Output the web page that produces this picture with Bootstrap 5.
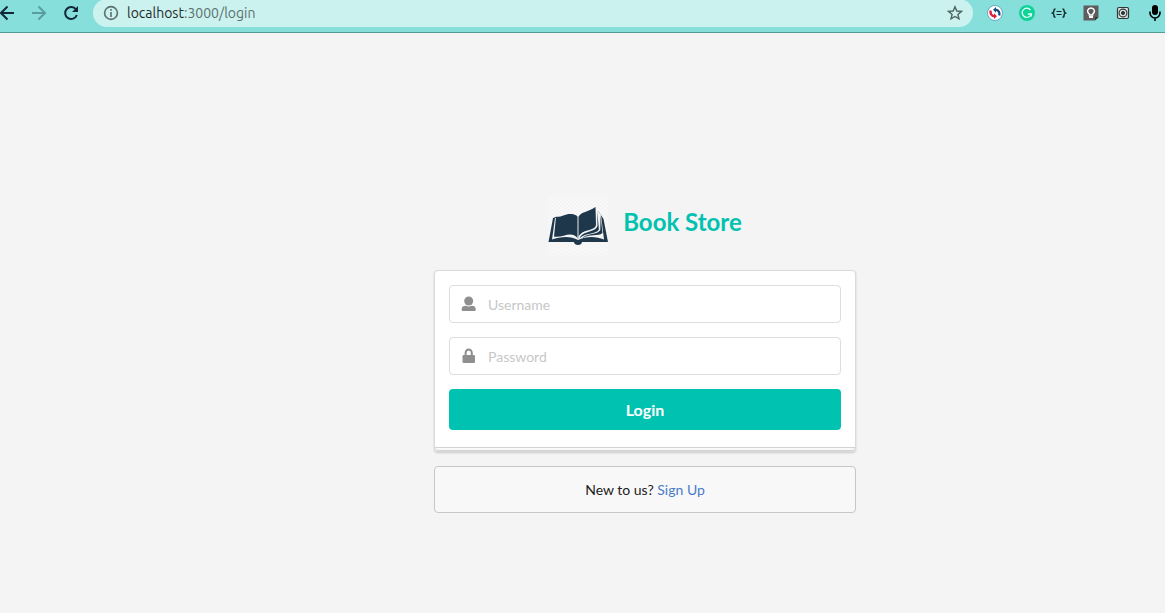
<!DOCTYPE html>
<html lang="en">
<head>
<meta charset="utf-8">
<meta name="viewport" content="width=device-width, initial-scale=1">
<title>Book Store - Login</title>
<link rel="stylesheet" href="https://cdn.jsdelivr.net/npm/bootstrap@5.3.0/dist/css/bootstrap.min.css">
<style>
  :root { --teal: #00c2b0; --line: #dcddde; }
  body { background: #f4f4f4; font-family: Lato, "Liberation Sans", sans-serif; font-size: 14px; line-height: 20px; color: #212121; overflow-x: hidden; }
  .browser-bar { background: #87dfdb; border-bottom: 1px solid #559c99; padding-bottom: 6px; overflow: hidden; }
  .bar-items { height: 26px; margin: 0 -6px 0 -9px; }
  .tool { width: 32px; height: 26px; border: 0; padding: 0; background: transparent; }
  .tool svg, .address svg { display: block; }
  .address { background: #cbf2ee; border-radius: 14px; margin: 0 6px; padding: 0 10px; height: 28px; }
  .url-text { font-family: Ubuntu, "Noto Sans", sans-serif; font-size: 14px; color: #5d706f; }
  .url-text span { color: #1f2a2a; }
  .login-area { padding: 162px 0 48px 125px; }
  .login-column { width: 422px; max-width: 100%; }
  .brand { font-size: 24px; line-height: 32px; font-weight: 700; color: var(--teal); margin: 0 0 6px 15px; }
  .brand-art { width: 60px; height: 60px; }
  .panel { background: #fff; border: 1px solid #d9dadb; border-radius: 4px; padding: 14px 14px 0; box-shadow: 0 1px 2px rgba(34,36,38,.2); margin-top: 15px; }
  .pile { height: 4px; border-top: 1px solid #d2d3d3; border-bottom: 1px solid #d2d3d3; border-radius: 0 0 4px 4px; background: #f9f9f9; margin: 17px -14px 0; }
  .field { border: 1px solid var(--line); border-radius: 4px; height: 38px; margin-bottom: 14px; padding-left: 11px; }
  .field input { font-size: 14px; line-height: 20px; color: #212121; padding: 1px 12px 0 11px; height: 36px; }
  .field input:focus { box-shadow: none; background: transparent; }
  .field input::placeholder { color: #c7c7c7; opacity: 1; }
  .btn-login, .btn-login:hover { background: var(--teal); color: #fff; border: 0; border-radius: 4px; height: 41px; font-size: 16px; line-height: 20px; font-weight: 700; padding: 0; }
  .signup { background: #f8f8f8; border: 1px solid #c6c7c8; border-radius: 4px; height: 47px; margin-top: 14px; }
  .signup a { color: #4a7cc9; text-decoration: none; }
</style>
</head>
<body>
<header class="browser-bar">
  <div class="bar-items d-flex align-items-center">
    <button class="tool d-flex align-items-center justify-content-center flex-shrink-0" aria-label="Back">
      <svg width="16" height="16" viewBox="0 0 16 16" fill="none" stroke="#10283a" stroke-width="2"><path d="M15 8H2M8.500 1.500 2 8l6.500 6.500"/></svg>
    </button>
    <button class="tool d-flex align-items-center justify-content-center flex-shrink-0" aria-label="Forward">
      <svg width="16" height="16" viewBox="0 0 16 16" fill="none" stroke="#5a9d9f" stroke-width="2"><path d="M1 8h13M7.500 1.500 14 8l-6.500 6.500"/></svg>
    </button>
    <button class="tool d-flex align-items-center justify-content-center flex-shrink-0" aria-label="Reload">
      <svg width="16" height="16" viewBox="0 0 16 16" fill="none" stroke="#10283a" stroke-width="2"><path d="M13 4.500A6 6 0 1 0 13.800 10"/><path d="M15 1v6H9z" fill="#10283a" stroke="none"/></svg>
    </button>
    <div class="address d-flex align-items-center flex-grow-1">
      <svg width="16" height="16" viewBox="0 0 16 16" fill="none" stroke="#5c6e6d" stroke-width="1.600"><circle cx="8" cy="8" r="6.400"/><path d="M8 7v5M8 4v1.700"/></svg>
      <div class="url-text flex-grow-1 ps-2"><span>localhost</span>:3000/login</div>
      <svg width="16" height="16" viewBox="0 0 16 16" fill="none" stroke="#4d6463" stroke-width="1.400"><path d="M8 1.800 9.800 6l4.600.4-3.500 3 1.100 4.500L8 11.500l-4 2.400 1.100-4.500-3.500-3L6.200 6z"/></svg>
    </div>
    <button class="tool d-flex align-items-center justify-content-center flex-shrink-0" aria-label="Sync extension">
      <svg width="16" height="16" viewBox="0 0 16 16"><circle cx="8" cy="8" r="7.500" fill="#fff" stroke="#5b93b5" stroke-width=".8"/><g fill="none" stroke-width="2.400"><path d="M3.800 5.500C2.800 8.500 4.500 11 7.500 11.200" stroke="#e3203c"/><path d="M12.200 10.500C13.200 7.500 11.500 5 8.500 4.800" stroke="#174f82"/></g><path d="m7 8.300 3 3-3 2.700z" fill="#e3203c"/><path d="m9 7.700-3-3L9 2z" fill="#174f82"/></svg>
    </button>
    <button class="tool d-flex align-items-center justify-content-center flex-shrink-0" aria-label="Grammar extension">
      <svg width="16" height="16" viewBox="0 0 16 16"><circle cx="8" cy="8" r="8" fill="#10d39a"/><path d="M11.500 5A4.600 4.600 0 1 0 12.300 9H8.800M12.300 8.500v3" fill="none" stroke="#e9fff7" stroke-width="1.300"/></svg>
    </button>
    <button class="tool d-flex align-items-center justify-content-center flex-shrink-0" aria-label="JSON extension">
      <svg width="16" height="16" viewBox="0 0 16 16" fill="none" stroke="#152727" stroke-width="1.500"><path d="M4.500 4Q3 4 3 5.500T1.500 8Q3 8.500 3 10.500T4.500 12M11.500 4Q13 4 13 5.500T14.500 8Q13 8.500 13 10.500T11.500 12"/><path d="M5.500 6.500h5M5.500 9.500h5" stroke-width="1.200"/></svg>
    </button>
    <button class="tool d-flex align-items-center justify-content-center flex-shrink-0" aria-label="Notes extension">
      <svg width="16" height="16" viewBox="0 0 16 16"><path d="M.5.500h15V12L12 15.500H.5z" fill="#5d5d5d"/><path d="M15.500 12H12v3.500z" fill="#353535"/><path d="M6.300 10V9C3 6.500 5 3 8 3s5 3.500 1.700 6v1z" fill="none" stroke="#fff" stroke-width="1.400"/><path d="M6 11h4v2H6z" fill="#fff"/></svg>
    </button>
    <button class="tool d-flex align-items-center justify-content-center flex-shrink-0" aria-label="Capture extension">
      <svg width="16" height="16" viewBox="0 0 16 16" fill="none" stroke="#303535"><rect x="2.500" y="2.500" width="11" height="11" rx="1.500" fill="#dce4e3" stroke-width="1.200"/><circle cx="8" cy="8" r="3.900" stroke-width="1.100"/><circle cx="8" cy="8" r="1.600" fill="#303535"/></svg>
    </button>
    <button class="tool d-flex align-items-center justify-content-center flex-shrink-0" aria-label="Voice extension">
      <svg width="16" height="16" viewBox="0 0 16 16"><rect x="5" y="0" width="6" height="10" rx="3"/><path d="M3 6.500V8a5 5 0 0 0 10 0V6.500M8 13v3" fill="none" stroke="#000" stroke-width="1.600"/></svg>
    </button>
  </div>
</header>

<main class="login-area d-flex justify-content-center">
  <div class="login-column">
    <div class="d-flex align-items-center justify-content-center">
      <svg class="brand-art" viewBox="0 0 60 60" aria-hidden="true">
        <defs><pattern id="check" width="4" height="4" patternUnits="userSpaceOnUse"><path d="M0 0h2v2H0zM2 2h2v2H2z" fill="#f8f8f8"/></pattern></defs>
        <rect width="60" height="60" fill="url(#check)"/>
        <path d="M5 23 .5 47H26c0 4 8 4 8 0h26L55.500 24 53 20 50 16 30 24 8 22z" fill="#1f374b"/>
        <path d="M7 23 4 44.500c8-3 19-4 26 .5 8-4 18-4 26-.500L53 20l-3-4-2-1-18 9-22-1z" fill="#f3f4f4"/>
        <path d="M8 21.700C14 23 19 16 28.500 20.500L29.700 22v21C23 35 15 43 6 41.500z" fill="#1f374b"/>
        <path d="M30.300 22C34 16 41 17 47.500 12L48 30C46 37 35 33 30.300 42z" fill="#1f374b"/>
        <path d="m49.300 16 1.600 18.500C48 40 37 37 31.500 43.500 35 35 47 38 49.500 31z" fill="#1f374b"/>
        <path d="M52.500 20 54.500 38C50 42 42 38 34 43.500 38 38 50 40 52.300 35z" fill="#1f374b"/>
        <path d="M30 22v22" stroke="#aab3ba" stroke-width="1"/>
      </svg>
      <h1 class="brand">Book Store</h1>
    </div>

    <form class="panel" onsubmit="return false">
      <div class="field d-flex align-items-center">
        <label for="username" aria-label="Username"><svg class="d-block" width="16" height="16" viewBox="0 0 16 16" fill="#8f8f8f"><circle cx="7.700" cy="5" r="4.500"/><path d="M.7 14v-1c0-2 1.500-3.200 4-3.200q3 1.400 6 0c2.500 0 4 1.200 4 3.200v1q0 1-1 1h-12q-1 0-1-1z"/></svg></label>
        <input id="username" class="form-control border-0 bg-transparent" type="text" placeholder="Username" aria-label="Username">
      </div>
      <div class="field d-flex align-items-center">
        <label for="password" aria-label="Password"><svg class="d-block" width="16" height="16" viewBox="0 0 16 16" fill="#8f8f8f"><rect x="1.500" y="7" width="12.500" height="8" rx="1.300"/><path d="M4.600 8V5a3.100 3.500 0 0 1 6.200 0v3" fill="none" stroke="#8f8f8f" stroke-width="2"/></svg></label>
        <input id="password" class="form-control border-0 bg-transparent" type="password" placeholder="Password" aria-label="Password">
      </div>
      <button class="btn btn-login w-100 d-block" type="submit">Login</button>
      <div class="pile"></div>
    </form>

    <div class="signup d-flex align-items-center justify-content-center">
      <span>New to us? <a href="#">Sign Up</a></span>
    </div>
  </div>
</main>
<script src="https://cdn.jsdelivr.net/npm/bootstrap@5.3.0/dist/js/bootstrap.bundle.min.js"></script>
</body>
</html>
